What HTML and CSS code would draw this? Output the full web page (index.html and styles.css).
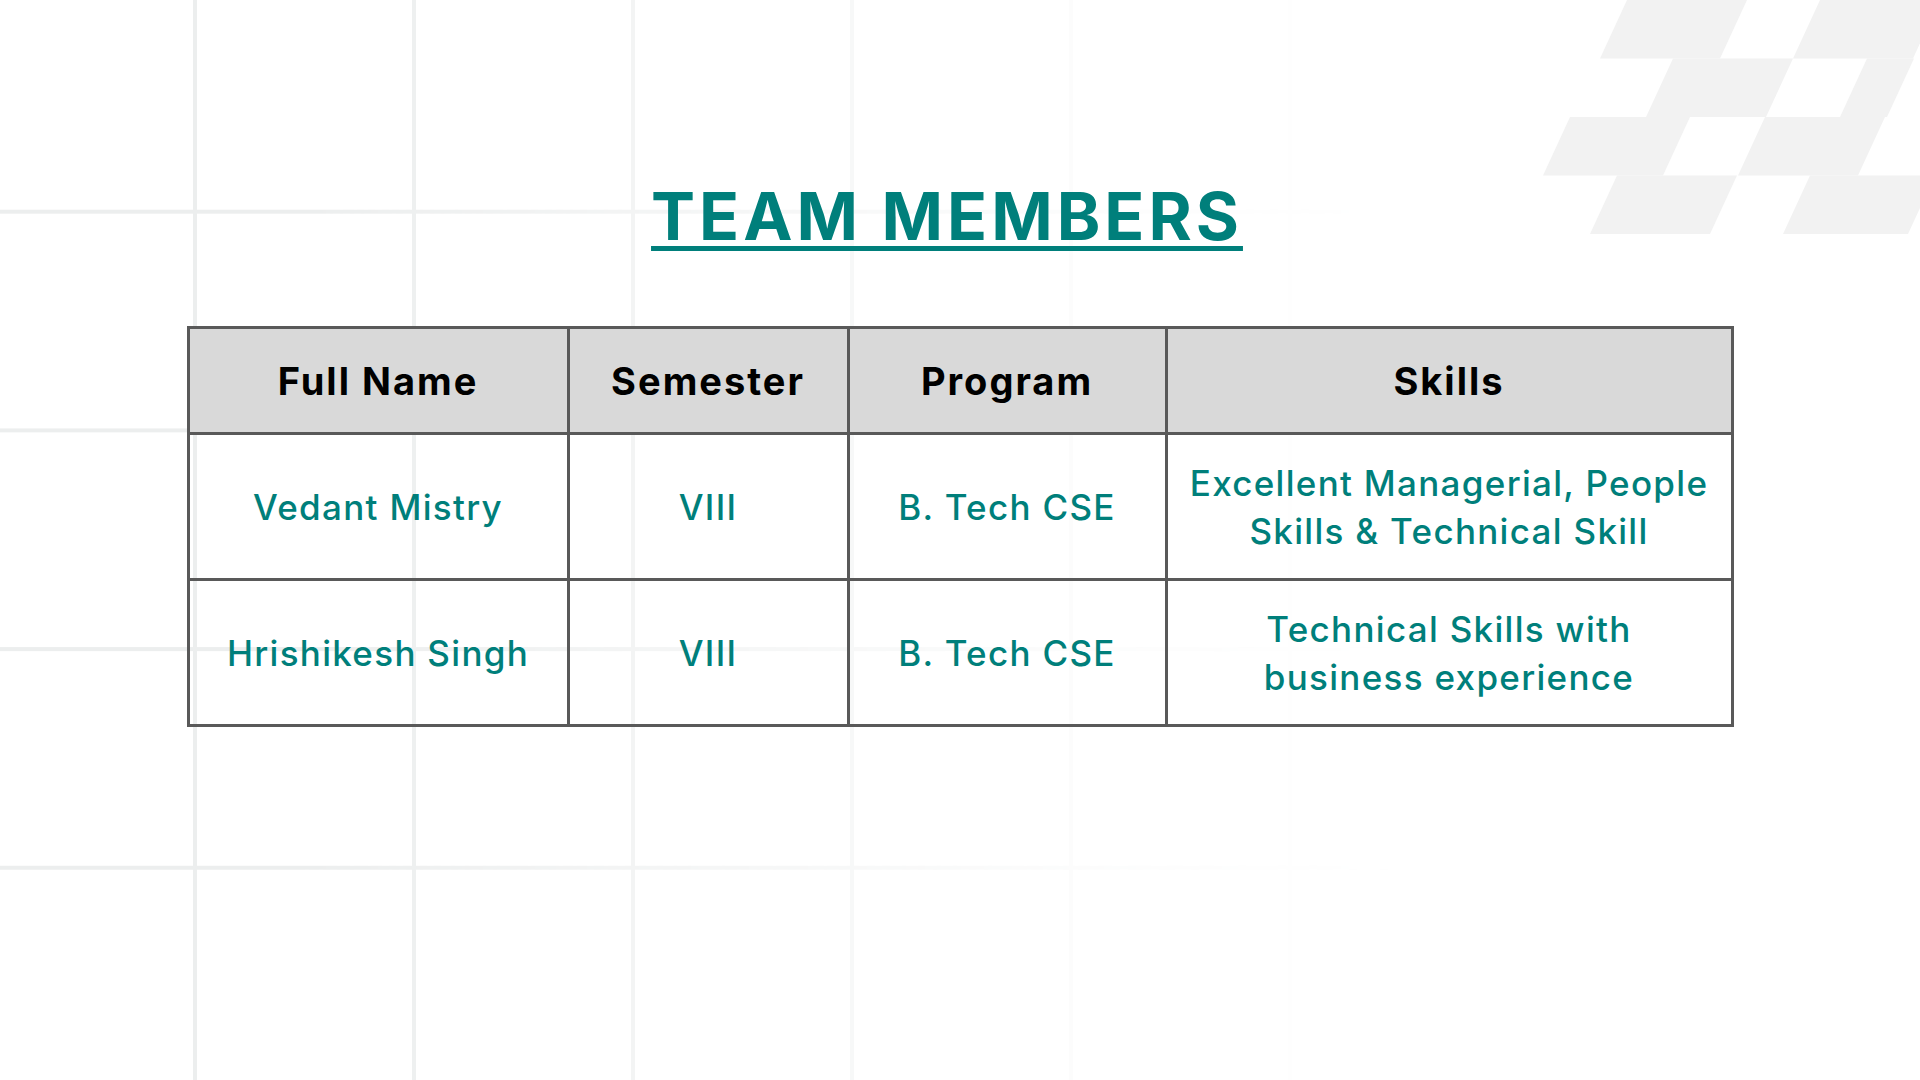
FILE: index.html
```html
<!DOCTYPE html>
<html lang="en">
<head>
<meta charset="utf-8">
<title>Team Members</title>
<link rel="stylesheet" href="styles.css">
</head>
<body>
<div class="slide">
  <div class="grid-bg"></div>
  <svg class="checker" width="400" height="234" viewBox="1520 0 400 234" aria-hidden="true">
    <g fill="#f2f2f2">
      <polygon points="1627,0 1747,0 1720,58.5 1600,58.5"/>
      <polygon points="1820,0 1940,0 1913,58.5 1793,58.5"/>
      <polygon points="1673,58.5 1793,58.5 1766,117 1646,117"/>
      <polygon points="1867,58.5 1914,58.5 1887,117 1840,117"/>
      <polygon points="1570,117 1690,117 1663,175.5 1543,175.5"/>
      <polygon points="1765,117 1885,117 1858,175.5 1738,175.5"/>
      <polygon points="1617,175.5 1737,175.5 1710,234 1590,234"/>
      <polygon points="1810,175.5 1935,175.5 1908,234 1783,234"/>
    </g>
  </svg>
  <main class="content">
    <h1 class="title">TEAM MEMBERS</h1>
    <table class="team">
      <colgroup>
        <col class="c-name">
        <col class="c-sem">
        <col class="c-prog">
        <col class="c-skill">
      </colgroup>
      <thead>
        <tr class="head-row">
          <th>Full Name</th>
          <th>Semester</th>
          <th>Program</th>
          <th>Skills</th>
        </tr>
      </thead>
      <tbody>
        <tr class="body-row">
          <td>Vedant Mistry</td>
          <td>VIII</td>
          <td>B. Tech CSE</td>
          <td>Excellent Managerial, People<br>Skills &amp; Technical Skill</td>
        </tr>
        <tr class="body-row">
          <td>Hrishikesh Singh</td>
          <td>VIII</td>
          <td>B. Tech CSE</td>
          <td>Technical Skills with<br>business experience</td>
        </tr>
      </tbody>
    </table>
  </main>
</div>
</body>
</html>
```
FILE: styles.css
```css
* { box-sizing: border-box; }
html, body {
  margin: 0;
  padding: 0;
  background: #ffffff;
}
body {
  width: 1920px;
  height: 1080px;
  overflow: hidden;
  font-family: "Inter", "Open Sans", sans-serif;
}
.slide {
  position: relative;
  width: 1920px;
  height: 1080px;
  background: #ffffff;
}
.grid-bg {
  position: absolute;
  inset: 0;
  background-image:
    linear-gradient(to right, transparent 193px, #eceeee 193px, #eceeee 197px, transparent 197px),
    linear-gradient(to bottom, transparent 210px, #eceeee 210px, #eceeee 214px, transparent 214px);
  background-size: 219px 100%, 100% 218.7px;
  background-position: 0 0, 0 0;
  -webkit-mask-image: linear-gradient(to right, #000 0px, #000 300px, rgba(0,0,0,0.55) 700px, rgba(0,0,0,0.15) 1100px, rgba(0,0,0,0) 1400px);
  mask-image: linear-gradient(to right, #000 0px, #000 300px, rgba(0,0,0,0.55) 700px, rgba(0,0,0,0.15) 1100px, rgba(0,0,0,0) 1400px);
}
.checker {
  position: absolute;
  top: 0;
  right: 0;
}
.content {
  position: relative;
  display: flex;
  flex-direction: column;
  align-items: center;
  padding-top: 176px;
}
.title {
  margin: 0 26px 0 0;
  font-size: 66px;
  line-height: 80px;
  font-weight: 700;
  color: #007f7b;
  text-decoration: underline;
  text-decoration-thickness: 5px;
  text-underline-offset: 6px;
  letter-spacing: 4px;
}
.team {
  margin-top: 70px;
  width: 1544px;
  border-collapse: collapse;
  border: 3px solid #595959;
  table-layout: fixed;
}
.c-name { width: 380px; }
.c-sem { width: 280px; }
.c-prog { width: 318px; }
.c-skill { width: 566px; }
.team th, .team td {
  border: 3px solid #595959;
  text-align: center;
  vertical-align: middle;
  padding: 0 8px;
}
.head-row { height: 106px; }
.head-row th {
  background: #d9d9d9;
  color: #000000;
  font-size: 38px;
  font-weight: 700;
  letter-spacing: 2px;
}
.body-row { height: 146px; }
.body-row td {
  color: #007f7b;
  font-size: 35px;
  font-weight: 500;
  line-height: 48px;
  letter-spacing: 1.3px;
}
```
